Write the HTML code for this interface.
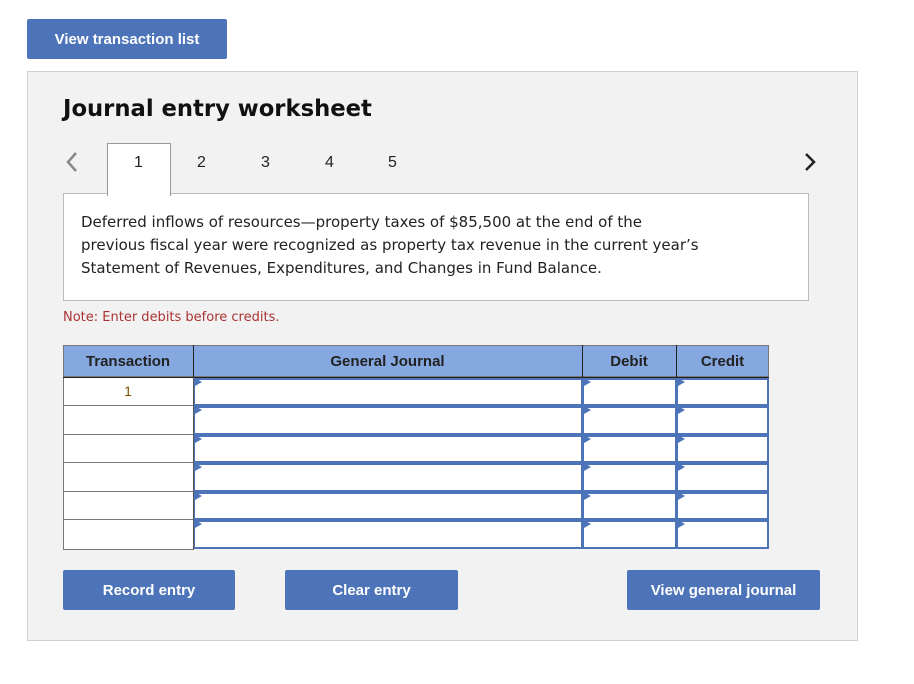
<!DOCTYPE html>
<html><head><style>
body{margin:0;width:914px;height:684px;background:#fff;font-family:"Liberation Sans",sans-serif;position:relative;overflow:hidden}
.a{position:absolute}
.btn{position:absolute;background:#4d74b8;color:#fff;font-weight:bold;font-size:15px;text-align:center;border-radius:2px;line-height:42px!important}
.tab{position:absolute;top:154px;font-size:16px;color:#222}
.cell{position:absolute;box-sizing:border-box;background:#fff}
.tri{position:absolute;width:0;height:0;border-top:4px solid transparent;border-bottom:4px solid transparent;border-left:7px solid #4d74b8}
</style></head><body>
<div class="btn" style="left:27px;top:19px;width:200px;height:40px">View transaction list</div>
<div class="a" style="left:27px;top:71px;width:829px;height:568px;background:#f2f2f2;border:1px solid #d0d0d0"></div>
<div class="a" style="left:63px;top:96px;font-weight:bold;color:#111;font-family:'DejaVu Sans',sans-serif;font-size:22.7px">Journal entry worksheet</div>
<svg class="a" style="left:64px;top:151px" width="16" height="22"><path d="M12 2 L4 11 L12 20" stroke="#888" stroke-width="2.5" fill="none"/></svg>
<svg class="a" style="left:802px;top:151px" width="16" height="22"><path d="M4 3 L12 11 L4 19" stroke="#222" stroke-width="2.5" fill="none"/></svg>
<div class="a" style="left:63px;top:193px;width:744px;height:106px;background:#fff;border:1px solid #bbb"></div>
<div class="a" style="left:107px;top:143px;width:62px;height:52px;background:#fff;border:1px solid #999;border-bottom:none"></div>
<div class="tab" style="left:134px">1</div>
<div class="tab" style="left:197px">2</div>
<div class="tab" style="left:261px">3</div>
<div class="tab" style="left:325px">4</div>
<div class="tab" style="left:388px">5</div>
<div class="a" style="left:81px;top:211px;width:620px;font-family:'DejaVu Sans',sans-serif;font-size:15px;line-height:23px;color:#222">Deferred inflows of resources—property taxes of $85,500 at the end of the previous fiscal year were recognized as property tax revenue in the current year’s Statement of Revenues, Expenditures, and Changes in Fund Balance.</div>
<div class="a" style="left:63px;top:310px;font-family:'DejaVu Sans',sans-serif;font-size:13px;color:#a33">Note: Enter debits before credits.</div>
<div class="a" style="left:63px;top:345px;width:706px;height:32px;background:#86a8e0;border:1px solid #777;box-sizing:border-box"></div>
<div class="a" style="left:193px;top:345px;width:1px;height:32px;background:#222"></div>
<div class="a" style="left:582px;top:345px;width:1px;height:32px;background:#222"></div>
<div class="a" style="left:676px;top:345px;width:1px;height:32px;background:#222"></div>
<div class="a" style="left:63px;top:377px;width:706px;height:1px;background:#222"></div>
<div class="a" style="top:353px;left:63px;width:130px;text-align:center;font-weight:bold;font-size:15px;color:#222">Transaction</div>
<div class="a" style="top:353px;left:193px;width:389px;text-align:center;font-weight:bold;font-size:15px;color:#222">General Journal</div>
<div class="a" style="top:353px;left:582px;width:94px;text-align:center;font-weight:bold;font-size:15px;color:#222">Debit</div>
<div class="a" style="top:353px;left:676px;width:93px;text-align:center;font-weight:bold;font-size:15px;color:#222">Credit</div>
<div class="a" style="left:63px;top:378px;width:130px;height:171px;background:#fff;border:1px solid #777;border-top:none;border-right:none"></div>
<div id="rows"></div>
<script>
var h='';var ys=[378,406,435,463,492,520,549];for(var i=0;i<6;i++){var y=ys[i],hh=ys[i+1]-y;
if(i>0)h+='<div class="a" style="left:63px;top:'+(y-1)+'px;width:131px;height:1px;background:#777"></div>';
[[194,389],[583,94],[677,92]].forEach(function(c){h+='<div class="cell" style="left:'+c[0]+'px;top:'+y+'px;width:'+c[1]+'px;height:'+hh+'px;border:2px solid #4d74b8;border-left-width:1px"></div><div class="tri" style="left:'+(c[0]+1)+'px;top:'+y+'px"></div>';});}
document.getElementById('rows').innerHTML=h;
</script>
<div class="a" style="left:63px;top:383px;width:130px;text-align:center;font-size:14px;color:#7a5000">1</div>
<div class="a" style="left:193px;top:377px;width:1px;height:173px;background:#555"></div>
<div class="btn" style="left:63px;top:570px;width:172px;height:40px">Record entry</div>
<div class="btn" style="left:285px;top:570px;width:173px;height:40px">Clear entry</div>
<div class="btn" style="left:627px;top:570px;width:193px;height:40px">View general journal</div>
</body></html>
